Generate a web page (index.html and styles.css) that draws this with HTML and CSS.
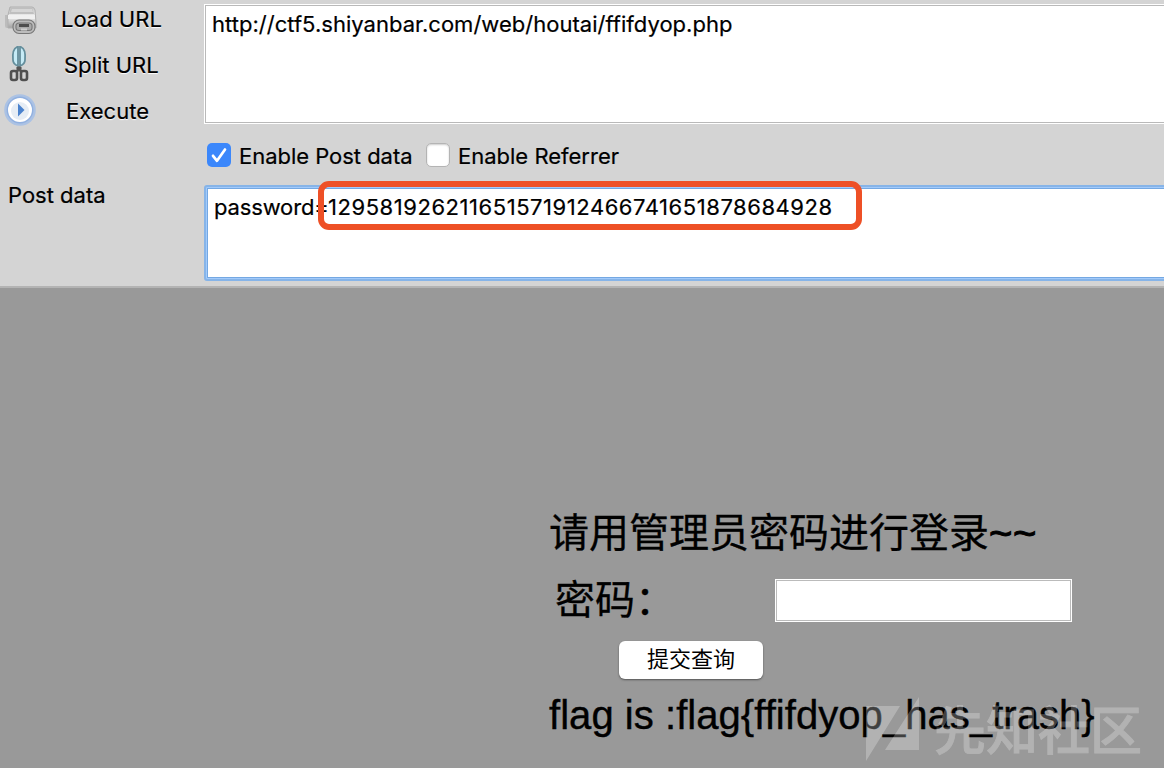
FILE: index.html
```
<!DOCTYPE html>
<html lang="zh">
<head>
<meta charset="utf-8">
<title>HackBar</title>
<link rel="stylesheet" href="styles.css">
</head>
<body>
<section class="toolbar">
  <div class="side">
    <div class="action">
      <svg class="icon" viewBox="0 0 40 44">
        <defs><linearGradient id="pr" x1="0" y1="0" x2="0" y2="1"><stop offset="0" stop-color="#c4c4c4"/><stop offset=".45" stop-color="#eee"/><stop offset="1" stop-color="#a2a2a2"/></linearGradient></defs>
        <path d="M5 15h5v13H7q-2 0-2-2z" fill="#bcbcbc"/>
        <path d="M10 7h22q2 0 3 3l1 12v6H8V15z" fill="url(#pr)" stroke="#b0b0b0"/>
        <path d="M11 7h21l2 7H9z" fill="#bfbfbf"/><path d="M12 9h20l1 3H11z" fill="#d6d6d6"/>
        <path d="M8 15h27v4H8z" fill="#f0f0f0"/>
        <rect x="14.500" y="21.500" width="19" height="10.500" rx="4.500" fill="#aaa" stroke="#777" stroke-width="4"/>
        <rect x="14.500" y="21.500" width="19" height="10.500" rx="4.500" fill="none" stroke="#bcbcbc" stroke-width="1.800"/>
        <path d="M19 25.500h10" stroke="#4e4e4e" stroke-width="3"/><path d="M21 29.500h6" stroke="#d0d0d0" stroke-width="2"/>
      </svg>
      <span class="t load">Load URL</span>
    </div>
    <div class="action">
      <svg class="icon" viewBox="0 0 40 44">
        <path d="M17 1q-5 2-4 13 0 4 5 6V1zM21 1q5 2 4 13 0 4-5 6V1z" fill="#c6ebf6" stroke="#648e9c" stroke-width="1.800"/>
        <path d="M17 21l5 5M21 21l-5 5" stroke="#555" stroke-width="3"/>
        <rect x="11" y="25" width="6" height="9" rx="2" fill="none" stroke="#505050" stroke-width="2.600"/>
        <rect x="21" y="25" width="6" height="9" rx="2" fill="none" stroke="#505050" stroke-width="2.600"/>
      </svg>
      <span class="t split">Split URL</span>
    </div>
    <div class="action">
      <svg class="icon" viewBox="0 0 40 44">
        <circle cx="20" cy="18" r="15.800" fill="#abc2e4"/><circle cx="20" cy="18" r="12.700" fill="#fff" stroke="#91b0df" stroke-width="1.400"/>
        <circle cx="20" cy="19" r="9" fill="#e6edf5"/><path d="M18 11.500v13l6.500-6.500z" fill="#4a82cd"/>
      </svg>
      <span class="t exec">Execute</span>
    </div>
    <div class="t postlabel">Post data</div>
  </div>
  <div class="fields">
    <div class="urlbox"><span class="t url">http://ctf5.shiyanbar.com/web/houtai/ffifdyop.php</span></div>
    <div class="options">
      <span class="check on"><svg viewBox="0 0 24 24"><path d="M6 12.800l4 5L18 6.500" fill="none" stroke="#fff" stroke-width="2.700" stroke-linecap="round" stroke-linejoin="round"/></svg></span>
      <span class="t enpost">Enable Post data</span>
      <span class="check"></span>
      <span class="t enref">Enable Referrer</span>
    </div>
    <div class="postbox">
      <span class="t pw">password=</span><span class="t digits">129581926211651571912466741651878684928</span>
      <div class="mark"></div>
    </div>
  </div>
</section>
<main class="page">
  <h1 class="title">请用管理员密码进行登录<span class="tilde">~~</span></h1>
  <div class="row"><span class="label">密码：</span><span class="input"></span></div>
  <div class="submit">提交查询</div>
  <p class="flag">flag is :flag{ffifdyop_has_trash}</p>
  <div class="watermark">
    <svg viewBox="0 0 56 66"><path d="M1 9h34L1 64zM54 0v53H20z" fill="#fff"/></svg>
    <span>先知社区</span>
  </div>
</main>
</body>
</html>
```
FILE: styles.css
```
* { box-sizing: border-box; }
body { margin: 0; width: 1164px; height: 768px; overflow: hidden; background: #999; color: #000; font-family: Inter, "Noto Sans CJK SC", sans-serif; }
.toolbar { display: flex; height: 288px; background: #d4d4d4; border-bottom: 2px solid #b3b3b3; overflow: hidden; }
.t { font-size: 22px; line-height: 28px; white-space: nowrap; -webkit-text-stroke: .2px #000; }
.side { width: 204px; flex: none; }
.action { display: flex; height: 46px; }
.action .t { margin-top: 5px; text-shadow: 0 1px 1px #fff; }
.icon { width: 40px; height: 44px; flex: none; }
.load { margin-left: 21px; }
.split { margin-left: 24px; }
.exec { margin-left: 26px; }
.postlabel { margin: 43px 0 0 8px; }
.fields { flex: 1; min-width: 0; }
.urlbox { margin-top: 4px; height: 120px; width: 970px; background: #fff; border: 1px solid #fff; outline: 1px solid #b9b9b9; outline-offset: -2px; padding: 5px 0 0 7px; }
.url { letter-spacing: .02px; }
.options { display: flex; height: 61px; padding: 19px 0 0 3px; }
.check { width: 24px; height: 24px; flex: none; border-radius: 5px; background: #fff; border: 1px solid #b4b4b4; box-shadow: inset 0 1px 2px #ccc; }
.check.on { background: #3b87fb; border: 0; box-shadow: none; }
.check svg { display: block; }
.options .t { margin: -1px 0 0 8px; }
.enpost { width: 187px; letter-spacing: -.03px; }
.postbox { position: relative; width: 970px; height: 96px; display: flex; background: #fff; border: 2px solid #86b4e8; border-radius: 3px; outline: 1px solid #a2cafb; outline-offset: -3px; box-shadow: inset 0 0 0 2px #74a8e2; padding: 6px 0 0 8px; }
.mark { position: absolute; left: 112px; top: -6px; width: 544px; height: 49px; border: 6px solid #ee5026; border-radius: 11px; }
.pw { width: 114px; letter-spacing: -.15px; }
.digits { letter-spacing: .55px; }
.page { height: 480px; padding: 219px 0 0 549px; }
.title { margin: 0; font-weight: 400; font-size: 40px; line-height: 52px; white-space: nowrap; -webkit-text-stroke: .3px #000; }
.tilde { font-family: "Liberation Sans", sans-serif; letter-spacing: .6px; -webkit-text-stroke: 1px #000; }
.row { display: flex; align-items: center; margin-top: 15px; padding-left: 6px; height: 52px; }
.label { width: 220px; font-size: 40px; line-height: 52px; -webkit-text-stroke: .3px #000; }
.input { width: 297px; height: 43px; background: #fff; border: 1px solid #fff; outline: 1px solid #bbb; outline-offset: -2px; }
.submit { width: 144px; height: 38px; margin: 15px 0 0 70px; border-radius: 6px; background: #fff; box-shadow: 0 1px 2px #555; font-size: 22px; line-height: 36px; text-align: center; }
.flag { margin: 12px 0 0; font: 40px/48px "Liberation Sans", sans-serif; letter-spacing: .05px; white-space: nowrap; -webkit-text-stroke: .4px #000; }
.watermark { position: absolute; left: 865px; top: 697px; display: flex; color: #fff; opacity: .25; font: 500 52px/62px "Noto Sans CJK SC", sans-serif; white-space: nowrap; -webkit-text-stroke: .8px #fff; }
.watermark svg { width: 56px; height: 66px; margin-right: 13px; }
```
